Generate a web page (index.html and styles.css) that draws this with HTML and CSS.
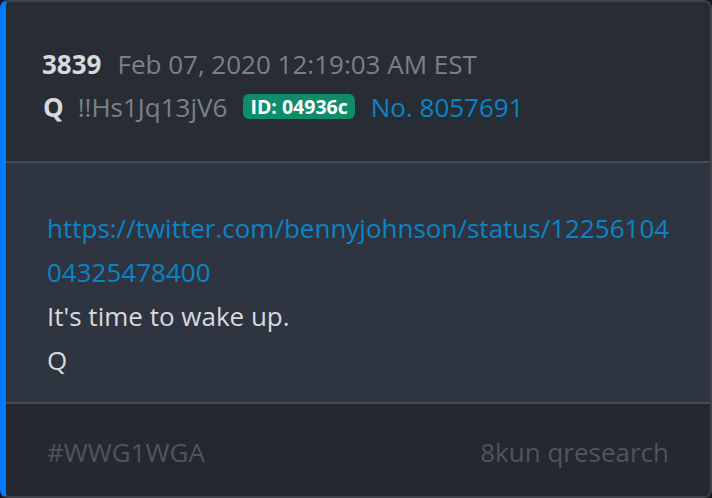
FILE: index.html
```html
<!DOCTYPE html>
<html>
<head>
<meta charset="utf-8">
<link rel="stylesheet" href="styles.css">
</head>
<body>
<div class="card">
  <div class="header">
    <div class="row">
      <span class="num">3839</span>
      <span class="date">Feb 07, 2020 12:19:03 AM EST</span>
    </div>
    <div class="row">
      <span class="name">Q</span>
      <span class="trip">!!Hs1Jq13jV6</span>
      <span class="badge">ID: 04936c</span>
      <span class="postno">No. 8057691</span>
    </div>
  </div>
  <div class="content">
    <div class="link">https://twitter.com/bennyjohnson/status/1225610404325478400</div>
    <div class="text">It's time to wake up.</div>
    <div class="text">Q</div>
  </div>
  <div class="footer">
    <span class="tag">#WWG1WGA</span>
    <span class="src">8kun qresearch</span>
  </div>
</div>
</body>
</html>
```

FILE: styles.css
```css
html, body {
  margin: 0;
  padding: 0;
  background: #15171b;
}
.card {
  box-sizing: border-box;
  width: 712px;
  height: 498px;
  border: 2px solid #3e434d;
  border-left: 6px solid #007bff;
  border-radius: 8px;
  overflow: hidden;
  display: flex;
  flex-direction: column;
  font-family: "Open Sans", sans-serif;
  font-size: 26px;
}
.header {
  background: #282c34;
  height: 161px;
  box-sizing: border-box;
  padding: 40px 0 0 36px;
  border-bottom: 2px solid #434852;
  display: flex;
  flex-direction: column;
}
.row {
  display: flex;
  align-items: center;
  height: 43px;
}
.num {
  font-weight: 700;
  color: #d8d9dc;
  margin-right: 16px;
}
.date {
  color: #7b808b;
}
.name {
  font-weight: 700;
  color: #d8d9dc;
  margin-right: 14px;
  margin-left: 1px;
}
.trip {
  color: #7b808b;
  margin-right: 16px;
}
.badge {
  background: #0f8d69;
  color: #ffffff;
  font-weight: 700;
  font-size: 19.5px;
  border-radius: 6px;
  padding: 0 7px;
  line-height: 25px;
  margin-right: 16px;
}
.postno {
  color: #0a84c8;
}
.content {
  background: #2f3540;
  height: 241px;
  box-sizing: border-box;
  padding: 43px 30px 0 41px;
  border-bottom: 2px solid #444a55;
  line-height: 44px;
}
.link {
  color: #0a84c8;
  word-break: break-all;
}
.text {
  color: #d8d9dc;
}
.footer {
  flex: 1;
  background: #252831;
  display: flex;
  justify-content: space-between;
  align-items: center;
  padding: 4px 41px 0 41px;
  color: #4f545e;
}
```
